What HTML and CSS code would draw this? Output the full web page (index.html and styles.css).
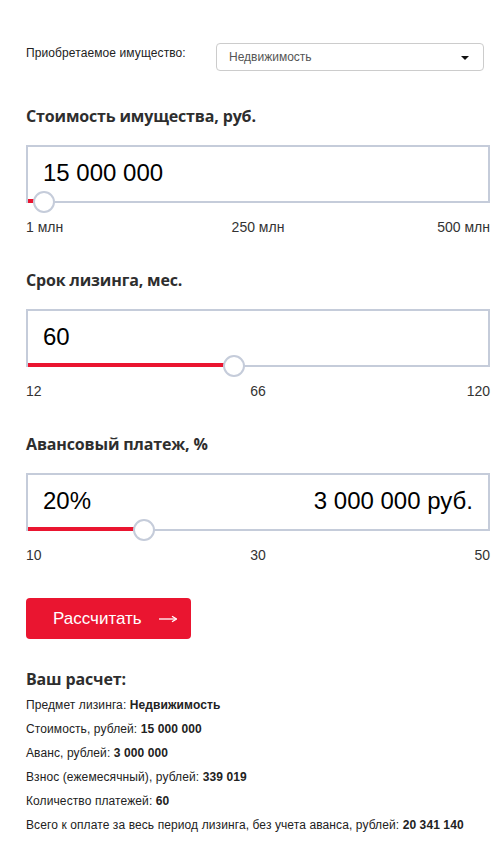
FILE: index.html
```html
<!DOCTYPE html>
<html lang="ru">
<head>
<meta charset="utf-8">
<title>Лизинговый калькулятор</title>
<link rel="stylesheet" href="styles.css">
</head>
<body>
<div class="page">
  <div class="select-row">
    <div class="select-label">Приобретаемое имущество:</div>
    <div class="select">
      <span>Недвижимость</span>
      <svg class="caret" width="8" height="4" viewBox="0 0 8 4"><path d="M0 0H8L4 4Z" fill="#111"/></svg>
    </div>
  </div>

  <section class="calc">
    <h2 class="calc-title">Стоимость имущества, руб.</h2>
    <div class="field">
      <span class="field-value">15 000 000</span>
      <div class="fill" style="width:16px"></div>
      <div class="thumb" style="left:5px"></div>
    </div>
    <div class="scale"><span>1 млн</span><span>250 млн</span><span>500 млн</span></div>
  </section>

  <section class="calc">
    <h2 class="calc-title">Срок лизинга, мес.</h2>
    <div class="field">
      <span class="field-value">60</span>
      <div class="fill" style="width:206px"></div>
      <div class="thumb" style="left:195px"></div>
    </div>
    <div class="scale"><span>12</span><span>66</span><span>120</span></div>
  </section>

  <section class="calc">
    <h2 class="calc-title">Авансовый платеж, %</h2>
    <div class="field">
      <span class="field-value">20%</span>
      <span class="field-value">3 000 000 руб.</span>
      <div class="fill" style="width:116px"></div>
      <div class="thumb" style="left:105px"></div>
    </div>
    <div class="scale"><span>10</span><span>30</span><span>50</span></div>
  </section>

  <button class="submit" type="button">
    <span>Рассчитать</span>
    <svg width="18" height="8" viewBox="0 0 18 8"><path d="M0 4H16.5" stroke="#fff" stroke-width="1.3"/><path d="M13 1.2L17.5 4L13 6.8" fill="none" stroke="#fff" stroke-width="1.3"/></svg>
  </button>

  <section class="result">
    <h2 class="calc-title">Ваш расчет:</h2>
    <p>Предмет лизинга: <b>Недвижимость</b></p>
    <p>Стоимость, рублей: <b>15 000 000</b></p>
    <p>Аванс, рублей: <b>3 000 000</b></p>
    <p>Взнос (ежемесячный), рублей: <b>339 019</b></p>
    <p>Количество платежей: <b>60</b></p>
    <p>Всего к оплате за весь период лизинга, без учета аванса, рублей: <b>20 341 140</b></p>
  </section>
</div>
</body>
</html>
```

FILE: styles.css
```css
* { box-sizing: border-box; }

body {
  margin: 0;
  background: #fff;
  color: #333;
  font-family: "Liberation Sans", Arial, sans-serif;
}

.page {
  padding: 43px 9px 20px 26px;
}

.select-row {
  display: flex;
  align-items: flex-start;
}

.select-label {
  width: 190px;
  font-size: 12px;
  line-height: 14px;
  padding-top: 3px;
  letter-spacing: 0.1px;
  color: #222;
}

.select {
  width: 268px;
  height: 28px;
  border: 1px solid #ccc;
  border-radius: 4px;
  padding: 0 14px 0 12px;
  display: flex;
  align-items: center;
  justify-content: space-between;
  font-size: 12px;
  color: #555;
}

.caret { display: block; margin-top: 1px; }

.calc-title {
  margin: 0;
  font-family: "Open Sans", sans-serif;
  font-weight: 700;
  font-size: 16px;
  line-height: 22px;
  color: #2e2e2e;
  letter-spacing: -0.15px;
}

.calc { margin-top: 34px; }

.calc .calc-title { margin-bottom: 18px; }

.field {
  position: relative;
  height: 58px;
  border: 2px solid #c5ccda;
  display: flex;
  justify-content: space-between;
  padding: 12px 15px 0 15px;
}

.field-value {
  font-size: 24px;
  line-height: 28px;
  color: #000;
}

.fill {
  position: absolute;
  left: 0;
  bottom: -2px;
  height: 4px;
  background: #ea1530;
}

.thumb {
  position: absolute;
  bottom: -12px;
  width: 22px;
  height: 22px;
  border-radius: 50%;
  background: #fff;
  border: 2px solid #c5ccda;
}

.scale {
  display: grid;
  grid-template-columns: 1fr 1fr 1fr;
  margin-top: 16px;
  font-size: 14px;
  line-height: 16px;
  color: #333;
}

.scale span:nth-child(2) { text-align: center; }
.scale span:nth-child(3) { text-align: right; }

.submit {
  margin-top: 35px;
  width: 165px;
  height: 41px;
  border: 0;
  border-radius: 4px;
  background: #ea1530;
  color: #fff;
  font-family: "Liberation Sans", Arial, sans-serif;
  font-size: 17px;
  display: flex;
  align-items: center;
  padding: 0 0 0 27px;
  gap: 17px;
  cursor: pointer;
}

.submit svg { display: block; }

.result { margin-top: 29px; }

.result .calc-title { margin-bottom: 3px; }

.result p {
  margin: 0;
  font-size: 12px;
  line-height: 24px;
  letter-spacing: 0.1px;
  color: #222;
}

.result b { font-weight: 700; }
```
